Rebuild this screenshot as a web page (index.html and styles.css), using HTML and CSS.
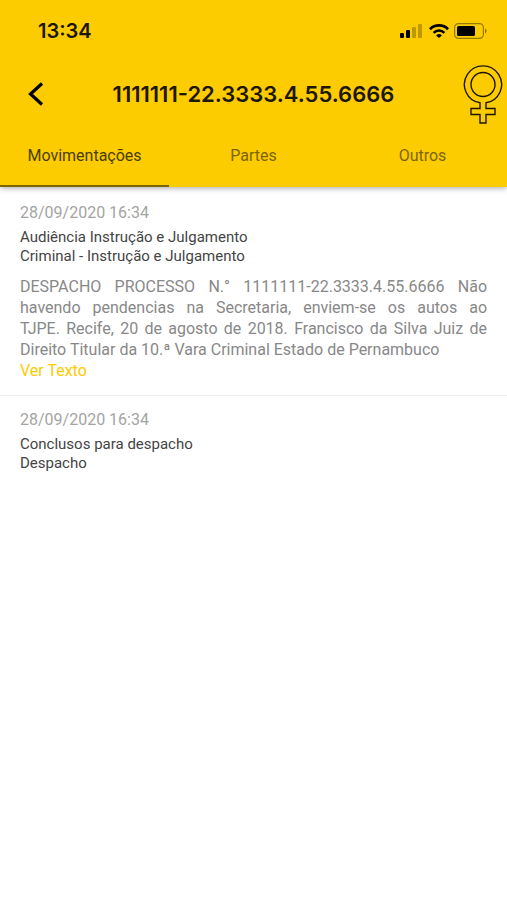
FILE: index.html
```html
<!DOCTYPE html>
<html lang="pt-BR">
<head>
    <meta charset="UTF-8">
    <title>Processo | Movimentações</title>
    <meta name="viewport" content="width=device-width, initial-scale=1.0">
    <link rel="stylesheet" href="styles.css">
</head>
<body>
<header class="app-header">
    <div class="status-bar">
        <span class="clock">13:34</span>
        <div class="status-icons">
            <svg class="signal" viewBox="0 0 24 14">
                <rect x="0" y="9" width="4" height="5" rx="1"/>
                <rect x="6" y="6" width="4" height="8" rx="1"/>
                <rect x="12" y="3" width="4" height="11" rx="1" opacity="0.25"/>
                <rect x="18" y="0" width="4" height="14" rx="1" opacity="0.25"/>
            </svg>
            <svg class="wifi" viewBox="0 0 20 14">
                <path d="M1 5.2a12.700 12.700 0 0 1 18 0" fill="none" stroke="#000" stroke-width="2.8"/>
                <path d="M4.600 8.8a7.600 7.600 0 0 1 10.800 0" fill="none" stroke="#000" stroke-width="2.5"/>
                <path d="M7.2 11.4a4 4 0 0 1 5.6 0L10 14z"/>
            </svg>
            <svg class="battery" viewBox="0 0 33 16">
                <rect x="0.6" y="0.6" width="28.8" height="14.8" rx="4" fill="none" stroke="#000" stroke-width="1.2" opacity="0.4"/>
                <rect x="3" y="3" width="18" height="10" rx="1.5"/>
                <path d="M31 5.5v5c2-.8 2-4.2 0-5z" opacity="0.45"/>
            </svg>
        </div>
    </div>
    <div class="title-bar">
        <button class="back-btn" type="button" aria-label="Voltar">
            <svg viewBox="0 0 16 24">
                <path d="M14 1.5L2.500 12 14 22.500" fill="none" stroke="#000" stroke-width="3.2"/>
            </svg>
        </button>
        <h1 class="title">1111111-22.3333.4.55.6666</h1>
        <svg class="venus" viewBox="0 0 40 60" fill="none" stroke="#1d1600" stroke-width="1.4">
            <circle cx="20" cy="20.500" r="12"/>
            <path d="M17 38.800A18.600 18.600 0 1 1 23 38.800V44.500H32V50.500H23V59H17V50.500H8V44.500H17z"/>
        </svg>
    </div>
    <nav class="tabs">
        <button class="tab active" type="button">Movimentações</button>
        <button class="tab" type="button">Partes</button>
        <button class="tab" type="button">Outros</button>
    </nav>
</header>
<main class="movements">
    <article class="movement">
        <time class="date" datetime="2020-09-28T16:34">28/09/2020 16:34</time>
        <h2 class="subject">Audiência Instrução e Julgamento<br>Criminal - Instrução e Julgamento</h2>
        <p class="text">DESPACHO PROCESSO N.° 1111111-22.3333.4.55.6666 Não havendo pendencias na Secretaria, enviem-se os autos ao TJPE.&nbsp;Recife, 20 de agosto de 2018. Francisco da Silva Juiz de Direito Titular da 10.ª Vara Criminal Estado de Pernambuco</p>
        <a class="more" href="#">Ver Texto</a>
    </article>
    <article class="movement">
        <time class="date" datetime="2020-09-28T16:34">28/09/2020 16:34</time>
        <h2 class="subject">Conclusos para despacho<br>Despacho</h2>
    </article>
</main>
</body>
</html>
```

FILE: styles.css
```css
:root {
    --primary: #fccc00;
    --text: #444;
    --muted: #888;
    --light: #a4a4a4;
    --gutter: 20px;
}
* {
    box-sizing: border-box;
}
body {
    font-family: Roboto, Arial, sans-serif;
    font-size: 16px;
    background: #fff;
    margin: 0;
}
button {
    font: inherit;
    background: none;
    border: none;
    padding: 0;
    cursor: pointer;
}
svg {
    display: block;
}
.app-header {
    background: var(--primary);
    box-shadow: 0 1px 6px rgba(0,0,0,0.35);
}
.status-bar {
    display: flex;
    align-items: center;
    justify-content: space-between;
    height: 62px;
    padding: 0 20px 0 38px;
}
.clock {
    font-family: Inter, sans-serif;
    font-size: 20px;
    font-weight: 600;
    color: #1d1600;
}
.status-icons {
    display: flex;
    align-items: center;
    gap: 5px;
}
.signal {
    width: 24px;
    height: 14px;
}
.wifi {
    width: 20px;
    height: 14px;
}
.battery {
    width: 33px;
    height: 16px;
}
.title-bar {
    display: grid;
    grid-template-columns: 44px 1fr 44px;
    align-items: center;
    height: 64px;
}
.back-btn {
    display: flex;
    justify-content: flex-end;
    padding: 8px 0;
}
.back-btn svg {
    width: 16px;
    height: 24px;
}
.title {
    font-family: Inter, sans-serif;
    font-size: 22px;
    font-weight: 600;
    color: #1d1600;
    text-align: center;
    margin: 0;
}
.venus {
    width: 40px;
    height: 60px;
}
.tabs {
    display: grid;
    grid-template-columns: repeat(3, 1fr);
}
.tab {
    height: 61px;
    border-bottom: 2px solid transparent;
    color: #7d6500;
}
.tab.active {
    color: #4b3d00;
    border-color: #7d6500;
}
.movements {
    padding-top: 2px;
}
.movement {
    padding: 13px var(--gutter) 14px;
    border-bottom: 1px solid #eee;
}
.movement:last-child {
    border-bottom: none;
}
.date {
    display: block;
    line-height: 22px;
    color: var(--light);
}
.subject {
    font-size: 15px;
    font-weight: 400;
    line-height: 19px;
    color: var(--text);
    margin: 4px 0 10px;
}
.text {
    line-height: 21px;
    color: var(--muted);
    text-align: justify;
    margin: 0;
}
.more {
    display: block;
    line-height: 21px;
    color: var(--primary);
    text-decoration: none;
}
```
